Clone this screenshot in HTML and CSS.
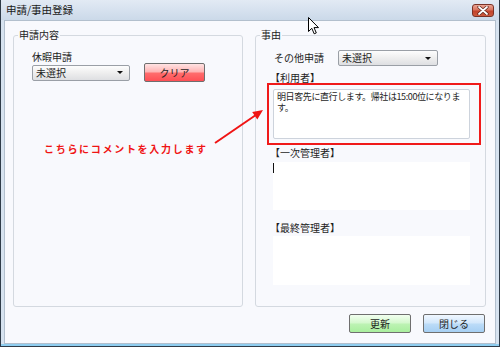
FILE: index.html
```html
<!DOCTYPE html>
<html lang="ja">
<head>
  <meta charset="UTF-8" />
  <title>申請/事由登録</title>
  <link rel="stylesheet" href="styles.css">
</head>
<body>

  <div class="window">

    <!-- Title bar -->
    <div class="titlebar">
      <span class="title">申請/事由登録</span>
      <button class="close-x" aria-label="close">
        <svg width="12" height="9" viewBox="0 0 12 9">
          <path d="M2 1 L10 8 M10 1 L2 8" stroke="#5a2218" stroke-width="3.2" stroke-linecap="round"/>
          <path d="M2 1 L10 8 M10 1 L2 8" stroke="#ffffff" stroke-width="1.8" stroke-linecap="round"/>
        </svg>
      </button>
    </div>

    <div class="frame">
      <div class="client">

        <div class="groups">
          <!-- 申請内容 -->
          <fieldset class="group group-left">
            <legend>申請内容</legend>
            <div class="field-label">休暇申請</div>
            <div class="row">
              <div class="select"><span>未選択</span><i class="caret"></i></div>
              <button class="btn btn-clear">クリア</button>
            </div>
          </fieldset>

          <!-- 事由 -->
          <fieldset class="group group-right">
            <legend>事由</legend>
            <div class="row row-other">
              <span class="row-label">その他申請</span>
              <div class="select"><span>未選択</span><i class="caret"></i></div>
            </div>

            <div class="field-label bracket lbl-user">【利用者】</div>
            <div class="memo-wrap">
              <div class="memo memo-filled">
                <div class="memo-line">明日客先に直行します。帰社は15:00位になりま</div>
                <div class="memo-line">す。</div>
              </div>
              <div class="highlight"></div>
            </div>

            <div class="field-label bracket lbl-first">【一次管理者】</div>
            <div class="memo memo-first"><i class="text-caret"></i></div>

            <div class="field-label bracket lbl-last">【最終管理者】</div>
            <div class="memo memo-last"></div>
          </fieldset>
        </div>

        <div class="actions">
          <button class="btn btn-update">更新</button>
          <button class="btn btn-close">閉じる</button>
        </div>

      </div>
    </div>

    <!-- annotation -->
    <div class="note">こちらにコメントを入力します</div>
    <svg class="arrow" width="500" height="347" viewBox="0 0 500 347">
      <line x1="215" y1="143" x2="255.5" y2="115.2" stroke="#f01414" stroke-width="2"/>
      <polygon points="263,110 257.3,119.4 252.2,112" fill="#f01414"/>
    </svg>

    <!-- mouse pointer -->
    <svg class="pointer" width="12" height="19" viewBox="0 0 12 19">
      <polygon points="0.5,0.5 0.5,14.5 3.8,11.3 6.2,16.8 8.3,15.9 6,10.6 10.5,10.6" fill="#fff" stroke="#000" stroke-width="1" stroke-linejoin="round"/>
    </svg>

  </div>

</body>
</html>
```

FILE: styles.css
```css
* {
  box-sizing: border-box;
  margin: 0;
  padding: 0;
}

body, html {
  width: 500px;
  height: 347px;
  overflow: hidden;
  font-family: "Noto Sans CJK JP", "Noto Sans", sans-serif;
  font-size: 10px;
  color: #1e1e1e;
}

.window {
  position: relative;
  width: 500px;
  height: 347px;
  border: 1px solid #2f3b48;
  border-top: none;
  background: #d6e2ef;
  display: flex;
  flex-direction: column;
}

/* title bar */
.titlebar {
  height: 20px;
  flex: none;
  display: flex;
  align-items: center;
  padding-left: 5px;
  background: linear-gradient(#e2eaf4, #cbd9e9);
}

.title {
  font-size: 10.5px;
  line-height: 12px;
  color: #1a1a1a;
}

.close-x {
  position: absolute;
  top: 4px;
  right: 5px;
  width: 22px;
  height: 13px;
  border: 1px solid #7a3226;
  border-radius: 3px;
  background: linear-gradient(#eba594, #d8735e 45%, #c2432c 55%, #cc5a3e);
  display: flex;
  align-items: center;
  justify-content: center;
}

/* frame + client area */
.frame {
  flex: 1;
  padding: 0 3px 2px;
  background: linear-gradient(#d6e2ef, #d6e2ef calc(100% - 2px), #8fcdef calc(100% - 2px));
  display: flex;
}

.client {
  flex: 1;
  background: #f8f9fd;
  border: 1px solid #b2bfcd;
  padding: 8px 9px 0 8px;
  display: flex;
  flex-direction: column;
}

.groups {
  display: flex;
  gap: 12px;
  height: 278px;
}

.group {
  border: 1px solid #d4d9e0;
  border-radius: 3px;
  padding: 10px 10px 0 18px;
  min-width: 0;
}

.group-left { width: 230px; }
.group-right { width: 231px; padding-top: 9px; }

.group legend {
  margin-left: -14px;
  padding: 0 1px;
  font-size: 10px;
  line-height: 12px;
}

.field-label {
  line-height: 12px;
}

.bracket { margin-left: -4px; }

.row {
  display: flex;
  align-items: center;
  gap: 14px;
}

.row-other { gap: 0; }

.row-label {
  width: 64px;
  line-height: 12px;
}

/* dropdown */
.select {
  width: 98px;
  height: 16px;
  border: 1px solid #9a9fa6;
  border-radius: 2px;
  background: linear-gradient(#fdfdfd, #eeeeee 50%, #dedfe2);
  display: flex;
  align-items: center;
  justify-content: space-between;
  padding: 0 6px 0 3px;
  line-height: 12px;
}

.row-other .select { width: 100px; }

.caret {
  width: 0;
  height: 0;
  border-left: 3px solid transparent;
  border-right: 3px solid transparent;
  border-top: 3px solid #111;
}

/* buttons */
.btn {
  height: 19px;
  border: 1px solid #6f6f6f;
  border-radius: 2px;
  font-family: inherit;
  font-size: 10px;
  line-height: 12px;
  color: #1e1e1e;
  cursor: pointer;
}

.btn-clear {
  width: 61px;
  background: linear-gradient(#ffe3e3, #ffb2b2 48%, #ff6e6e 52%, #ff4f55);
}

.btn-update {
  width: 62px;
  background: linear-gradient(#f2fff0, #d3f8cc 48%, #bdf3b4 52%, #a9ef9e);
}

.btn-close {
  width: 62px;
  background: linear-gradient(#f0f7ff, #d2e7fb 48%, #bcdcf8 52%, #a6cff3);
}

.actions {
  display: flex;
  justify-content: flex-end;
  gap: 12px;
  margin-top: 7px;
  margin-right: 1px;
}

/* memo boxes */
.lbl-user { margin-top: 6px; }
.lbl-first { margin-top: 8px; }
.lbl-last { margin-top: 12px; }

.memo-wrap {
  position: relative;
  margin-top: 5px;
}

.memo {
  width: 197px;
  margin-left: -1px;
  background: #fff;
}

.memo-filled {
  height: 50px;
  border: 1px solid #cdd3dc;
  border-radius: 2px;
  padding: 1px 2px 0 3px;
  font-size: 9px;
  letter-spacing: -0.4px;
  white-space: nowrap;
  overflow: hidden;
}

.memo-line {
  height: 11px;
  line-height: 11px;
}

.memo-first {
  height: 48px;
  margin-top: 3px;
  padding: 1px 0 0 0;
}

.memo-last {
  height: 49px;
  margin-top: 2px;
}

.text-caret {
  display: block;
  width: 1px;
  height: 10px;
  background: #111;
}

.highlight {
  position: absolute;
  top: -6px;
  left: -7px;
  right: -6px;
  bottom: -6px;
  border: 2px solid #f01a1a;
}

/* annotation */
.note {
  position: absolute;
  left: 43px;
  top: 143px;
  font-size: 10px;
  line-height: 12px;
  font-weight: bold;
  letter-spacing: 1.7px;
  color: #f01414;
  white-space: nowrap;
}

.arrow {
  position: absolute;
  left: -1px;
  top: 0;
  pointer-events: none;
}

.pointer {
  position: absolute;
  left: 307px;
  top: 17px;
  pointer-events: none;
}
```
